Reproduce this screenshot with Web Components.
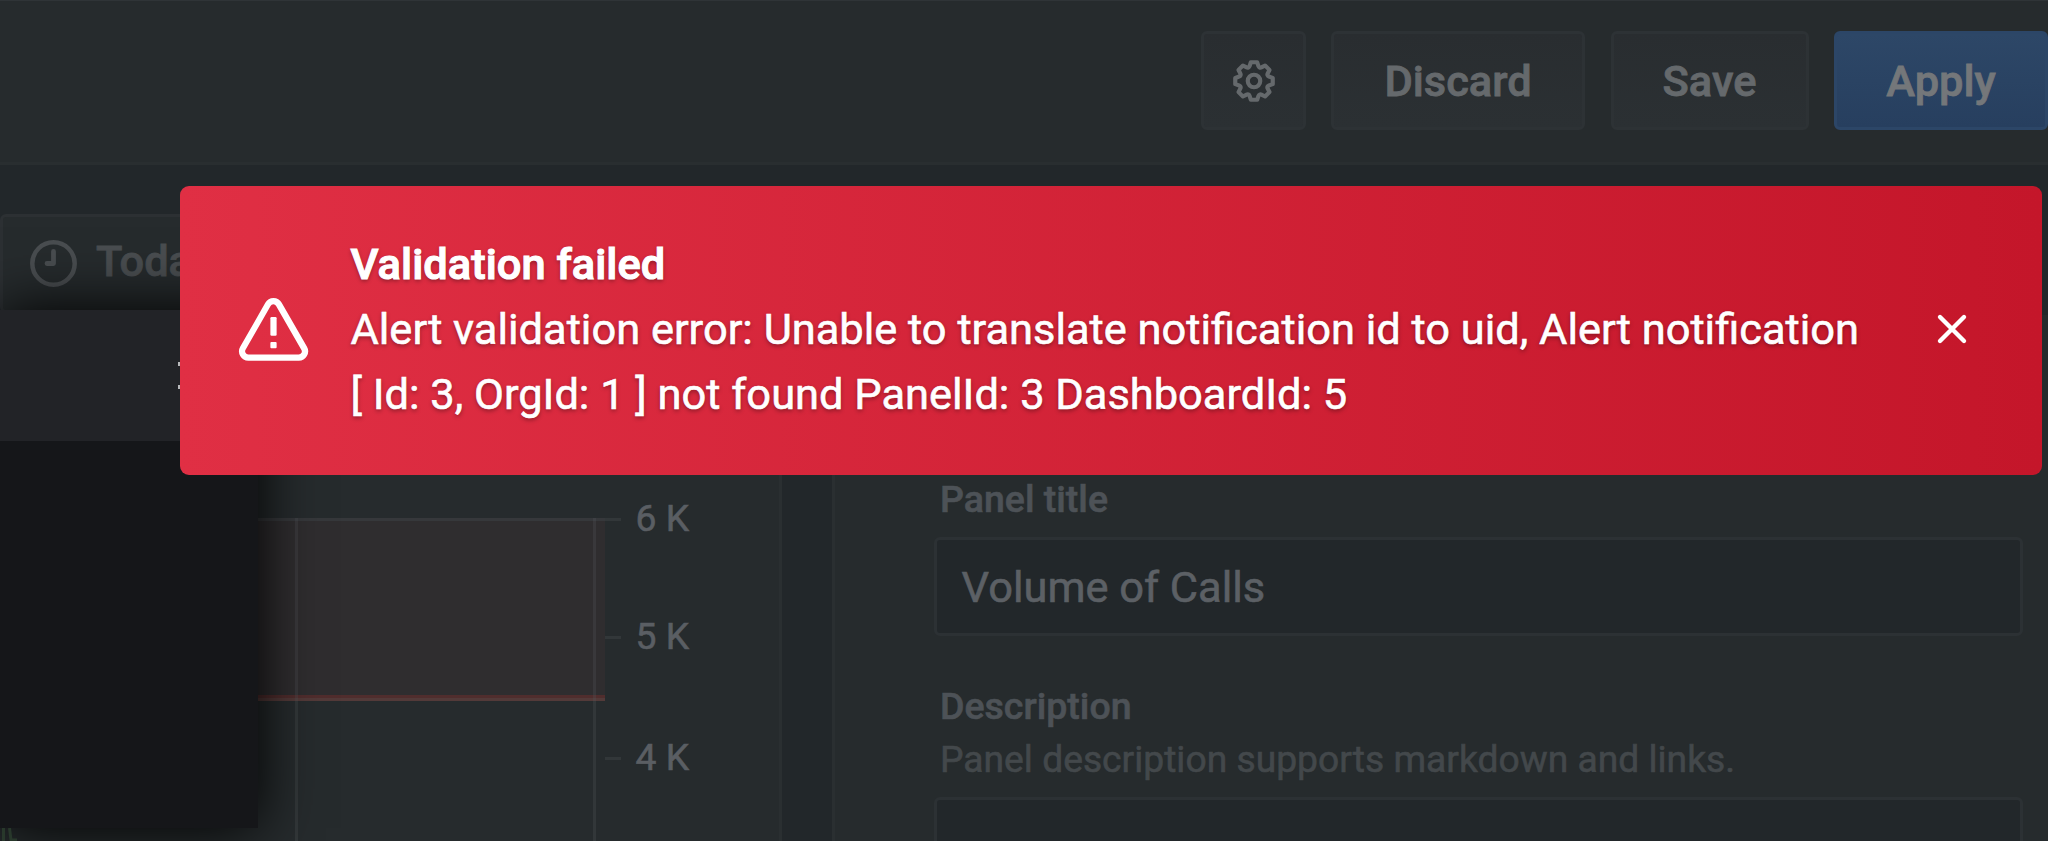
<!DOCTYPE html>
<html lang="en">
<head>
<meta charset="utf-8">
<title>Edit panel</title>
<style>
html,body{margin:0;height:100%;overflow:hidden;background:#22272a}
body{font:400 43.42px/65px Roboto,"Liberation Sans",sans-serif;-webkit-text-stroke:.6px currentColor}
</style>
</head>
<body>
<panel-editor></panel-editor>
<script>
const define = (name, html) => customElements.define(name, class extends HTMLElement {
  constructor() {
    super();
    const t = document.createElement('template');
    t.innerHTML = html;
    this.attachShadow({ mode: 'open' }).append(t.content.cloneNode(true));
  }
});

define('tool-button', `
<style>
:host{box-sizing:border-box;display:flex;align-items:center;justify-content:center;height:99px;border:3px solid #2d3235;border-radius:6px;
background:linear-gradient(#292d30,#2b3033);color:#65696c;font-weight:500;padding-top:2px;-webkit-text-stroke:.8px currentColor}
:host([primary]){background:linear-gradient(#2d4767,#273f5f);border-color:#2c4667;color:#74777a}
</style><slot></slot>`);

define('gear-icon', `
<style>:host{display:flex;margin:-2px 0 0 1px}svg{width:50px;height:50px;fill:currentColor}</style>
<svg viewBox="0 0 24 24"><path d="M21.32,9.55l-1.89-.63.89-1.78A1,1,0,0,0,20.13,6L18,3.87a1,1,0,0,0-1.15-.19l-1.78.89-.63-1.89A1,1,0,0,0,13.5,2h-3a1,1,0,0,0-.95.68L8.92,4.57,7.14,3.68A1,1,0,0,0,6,3.87L3.87,6a1,1,0,0,0-.19,1.15l.89,1.78-1.89.63A1,1,0,0,0,2,10.5v3a1,1,0,0,0,.68.95l1.89.63-.89,1.78A1,1,0,0,0,3.87,18L6,20.13a1,1,0,0,0,1.15.19l1.78-.89.63,1.89a1,1,0,0,0,.95.68h3a1,1,0,0,0,.95-.68l.63-1.89,1.78.89A1,1,0,0,0,18,20.13L20.13,18a1,1,0,0,0,.19-1.15l-.89-1.78,1.89-.63A1,1,0,0,0,22,13.5v-3A1,1,0,0,0,21.32,9.55ZM20,12.78l-1.2.4A2,2,0,0,0,17.64,16l.57,1.14-1.1,1.1L16,17.64a2,2,0,0,0-2.79,1.16l-.4,1.2H11.22l-.4-1.2A2,2,0,0,0,8,17.64l-1.14.57-1.1-1.1L6.36,16A2,2,0,0,0,5.2,13.18L4,12.78V11.22l1.2-.4A2,2,0,0,0,6.36,8L5.79,6.89l1.1-1.1L8,6.36A2,2,0,0,0,10.82,5.2l.4-1.2h1.56l.4,1.2A2,2,0,0,0,16,6.36l1.14-.57,1.1,1.1L17.64,8a2,2,0,0,0,1.16,2.79l1.2.4ZM12,8a4,4,0,1,0,4,4A4,4,0,0,0,12,8Zm0,6a2,2,0,1,1,2-2A2,2,0,0,1,12,14Z"/></svg>`);

define('editor-header', `
<style>
:host{box-sizing:border-box;display:flex;justify-content:flex-end;align-items:flex-start;gap:25.5px;height:165px;padding-top:30px;
background:#262b2d;border-top:1px solid #2f3437;border-bottom:3px solid #292e30}
.gear{width:105px}.discard{width:254px}.save{width:198px}.apply{width:214px}
</style>
<tool-button class="gear"><gear-icon></gear-icon></tool-button>
<tool-button class="discard">Discard</tool-button>
<tool-button class="save">Save</tool-button>
<tool-button class="apply" primary>Apply</tool-button>`);

define('time-button', `
<style>
:host{box-sizing:border-box;display:flex;align-items:center;height:99px;margin-top:49px;padding:0 0 0 27px;gap:19px;border:3px solid #2c3033;border-radius:6px;
background:#262b2d;color:#494d50;font-weight:500;-webkit-text-stroke:.8px currentColor}
svg{width:47px;height:47px;flex:none;fill:none;stroke:currentColor}
span{position:relative;top:-2px}
</style>
<svg viewBox="0 0 47 47"><circle cx="23.5" cy="23.5" r="21.2" stroke-width="4.5"/><path d="M23.5 11.5V23.5H17" stroke-width="4.8" stroke-linecap="round" stroke-linejoin="round"/></svg>
<span>Today</span>`);

define('axis-tick', `
<style>
:host{display:flex;align-items:center;gap:14.5px;height:118px;font-size:37.24px;color:#5a5e63}
i{width:16px;height:3px;background:#323739}
span{position:relative;top:-1px}
</style><i></i><span><slot></slot></span>`);

define('graph-panel', `
<style>
:host{box-sizing:border-box;display:grid;grid-template-columns:605px 1fr;flex:1;padding-top:147px;background:#262b2d;border-right:3px solid #2a2f31;min-height:0;overflow:hidden}
svg{display:block;width:605px;height:381px}
.axis{display:flex;flex-direction:column}
.last{height:124px}
</style>
<svg viewBox="0 460 605 381" shape-rendering="crispEdges">
<rect x="0" y="518" width="605" height="177" fill="#2f2d2f"/>
<rect x="0" y="518" width="605" height="3" fill="#36383b"/>
<rect x="0" y="695" width="605" height="3" fill="#502d2d"/>
<rect x="0" y="698" width="605" height="3" fill="#533a39"/>
<path d="M295 518h3v323h-3zM593 518h3v323h-3z" fill="#55585b" fill-opacity=".27"/>
</svg>
<div class="axis"><axis-tick>6 K</axis-tick><axis-tick>5 K</axis-tick><axis-tick class="last">4 K</axis-tick></div>`);

define('text-field', `
<style>
:host{box-sizing:border-box;display:flex;align-items:center;height:99px;padding:1px 24px 0 24.5px;border:3px solid #2c3134;border-radius:6px;background:#22272a;color:#5c6065}
</style><slot></slot>`);

define('options-pane', `
<style>
:host{box-sizing:border-box;flex:1;display:flex;flex-direction:column;margin-top:150px;padding:161px 25px 0 99px;background:#262b2d;border-left:3px solid #2a2f31;overflow:hidden}
label,p{margin:0 0 0 6px;font-size:37.24px;line-height:47px;flex:none}
label{font-weight:500;color:#4d5257;font-size:37.5px}
p{color:#43484b;line-height:53px;padding-top:3px}
text-field{flex:none}
.title{margin-top:14px}
.desc{margin-top:47px}
.area{margin-top:11px;height:140px}
</style>
<label>Panel title</label>
<text-field class="title">Volume of Calls</text-field>
<label class="desc">Description</label>
<p>Panel description supports markdown and links.</p>
<text-field class="area"></text-field>`);

define('time-popover', `
<style>
:host{position:absolute;left:0;top:310px;width:258px;height:518px;display:flex;flex-direction:column;background:#151619;box-shadow:0 0 56px #000}
div{height:131px;background:#222327}
</style><div></div>`);

/* Start of the graph series that shows below the popover. */
define('series-peek', `
<style>:host{position:absolute;left:0;top:828px}svg{display:block;width:20px;height:13px}</style>
<svg viewBox="0 0 20 13"><path d="M3.5 0V13M9.5 0L11 12H17" fill="none" stroke="#28382b" stroke-width="3"/></svg>`);

define('alert-toast', `
<style>
:host{box-sizing:border-box;position:absolute;left:180px;top:186px;width:1862px;height:289px;display:flex;align-items:center;padding-left:56px;
border-radius:9px;background:linear-gradient(90deg,#e02f44,#c4162a);color:#fff}
.warn{width:75px;height:75px;flex:none;fill:#fff;margin:-3px 0 0 -.5px}
.text{margin:-2px 0 0 40px;width:1530px;line-height:65px;text-shadow:0 2px 4px rgba(0,0,0,.38)}
.text div,.text ::slotted(div){white-space:nowrap}
.title{font-weight:500;-webkit-text-stroke:1.1px #fff;letter-spacing:.04px}
.close{width:34px;height:34px;flex:none;margin:-3px 0 0 54px;stroke:#fff;stroke-width:4.4;stroke-linecap:round}
</style>
<svg class="warn" viewBox="0 0 24 24"><path fill-rule="evenodd" d="M22.67,17.47l-8.05-14a3,3,0,0,0-5.24,0l-8,14A3,3,0,0,0,3.94,22H20.06a3,3,0,0,0,2.61-4.53Zm-1.73,2a1,1,0,0,1-.88.51H3.94a1,1,0,0,1-.88-.51,1,1,0,0,1,0-1l8-14a1,1,0,0,1,1.78,0l8.05,14A1,1,0,0,1,20.94,19.49Z"/><rect x="11" y="8" width="2" height="6" rx=".4"/><rect x="11" y="16" width="2" height="2" rx=".3"/></svg>
<div class="text"><div class="title"><slot name="title"></slot></div><slot></slot></div>
<svg class="close" viewBox="0 0 34 34"><path d="M5 5L29 29M29 5L5 29"/></svg>`);

define('panel-editor', `
<style>
:host{position:relative;display:flex;flex-direction:column;height:841px;overflow:hidden;background:#22272a}
main{flex:1;display:flex;gap:50.5px;min-height:0}
.left{width:781.5px;display:flex;flex-direction:column;min-height:0}
.dots{position:absolute;left:178px;top:362px;height:27px;display:flex;flex-direction:column;justify-content:space-between}
.dots i{width:2px;height:4px;background:#b9babc}
</style>
<editor-header></editor-header>
<main>
<div class="left"><time-button></time-button><graph-panel></graph-panel></div>
<options-pane></options-pane>
</main>
<time-popover></time-popover>
<series-peek></series-peek>
<div class="dots"><i></i><i></i></div>
<alert-toast><span slot="title">Validation failed</span><div>Alert validation error: Unable to translate notification id to uid, Alert notification</div><div>[ Id: 3, OrgId: 1 ] not found PanelId: 3 DashboardId: 5</div></alert-toast>`);
</script>
</body>
</html>
